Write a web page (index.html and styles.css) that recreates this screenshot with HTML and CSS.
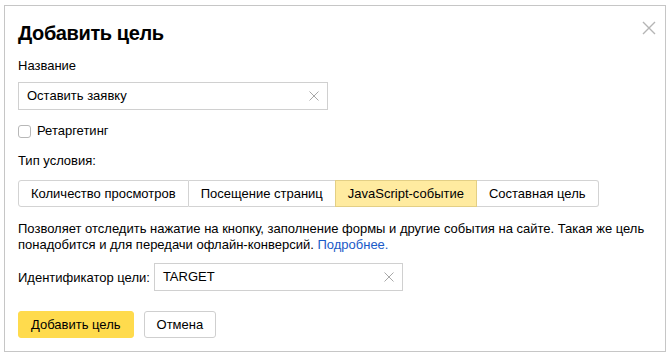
FILE: index.html
```html
<!DOCTYPE html>
<html lang="ru">
<head>
<meta charset="utf-8">
<title>Добавить цель</title>
<link rel="stylesheet" href="styles.css">
</head>
<body>
<div class="dialog">
  <button class="close" aria-label="Закрыть">
    <svg width="14" height="14" viewBox="0 0 14 14"><path d="M1 1L13 13M13 1L1 13" stroke="#b5b5b5" stroke-width="1.4" fill="none"/></svg>
  </button>
  <h1 class="title">Добавить цель</h1>
  <div class="label">Название</div>
  <div class="input name-input">
    <span class="input-text">Оставить заявку</span>
    <svg class="clear" width="10" height="10" viewBox="0 0 10 10"><path d="M0.5 0.5L9.5 9.5M9.5 0.5L0.5 9.5" stroke="#a8a8a8" stroke-width="1" fill="none"/></svg>
  </div>
  <label class="check">
    <span class="box"></span>
    <span>Ретаргетинг</span>
  </label>
  <div class="label cond-label">Тип условия:</div>
  <div class="segments">
    <span class="seg">Количество просмотров</span>
    <span class="seg">Посещение страниц</span>
    <span class="seg active">JavaScript-событие</span>
    <span class="seg">Составная цель</span>
  </div>
  <p class="desc">Позволяет отследить нажатие на кнопку, заполнение формы и другие события на сайте. Такая же цель понадобится и для передачи офлайн-конверсий. <a href="#">Подробнее.</a></p>
  <div class="id-row">
    <span class="id-label">Идентификатор цели:</span>
    <div class="input id-input">
      <span class="input-text">TARGET</span>
      <svg class="clear" width="10" height="10" viewBox="0 0 10 10"><path d="M0.5 0.5L9.5 9.5M9.5 0.5L0.5 9.5" stroke="#a8a8a8" stroke-width="1" fill="none"/></svg>
    </div>
  </div>
  <div class="actions">
    <button class="btn primary">Добавить цель</button>
    <button class="btn">Отмена</button>
  </div>
</div>
</body>
</html>
```

FILE: styles.css
```css
* { box-sizing: border-box; }
html, body { margin: 0; padding: 0; background: #fff; }
body {
  font-family: "Liberation Sans", Arial, sans-serif;
  font-size: 13px;
  color: #000;
  padding: 5px 4px 0 4px;
}
.dialog {
  position: relative;
  width: 662px;
  height: 347px;
  border: 1px solid #c6c6c6;
  padding: 0 13px;
}
.close {
  position: absolute;
  top: 15px;
  right: 9px;
  width: 14px;
  height: 14px;
  padding: 0;
  border: 0;
  background: none;
}
.close svg { display: block; }
.title {
  margin: 0;
  padding-top: 14px;
  font-size: 20px;
  letter-spacing: -0.4px;
  line-height: 26px;
  font-weight: bold;
}
.label {
  margin-top: 12px;
  line-height: 16px;
}
.input {
  display: flex;
  align-items: center;
  justify-content: space-between;
  height: 28px;
  border: 1px solid #d0d0d0;
  padding: 0 8px 0 8px;
}
.name-input {
  width: 310px;
  margin-top: 8px;
}
.input-text { line-height: 16px; }
.clear { display: block; }
.check {
  display: flex;
  align-items: center;
  gap: 6px;
  margin-top: 13px;
  line-height: 16px;
}
.box {
  width: 13px;
  height: 13px;
  border: 1px solid #b8b8b8;
  border-radius: 3px;
}
.cond-label { margin-top: 14px; }
.segments {
  display: flex;
  margin-top: 11px;
  height: 27px;
  width: fit-content;
}
.seg {
  display: flex;
  align-items: center;
  padding: 0 12px;
  border: 1px solid #d3d3d3;
  border-left-width: 0;
}
.seg:first-child { border-left-width: 1px; border-radius: 3px 0 0 3px; }
.seg:last-child { border-radius: 0 3px 3px 0; }
.seg.active {
  background: #ffeba0;
  border-color: #e3cf85;
  border-left-width: 1px;
  margin-left: -1px;
}
.desc {
  margin: 14px 0 0;
  line-height: 16px;
}
.desc a { color: #1a5ac8; text-decoration: none; }
.id-row {
  display: flex;
  align-items: center;
  gap: 4px;
  margin-top: 10px;
}
.id-input { width: 249px; }
.actions {
  display: flex;
  gap: 10px;
  margin-top: 20px;
}
.btn {
  font-family: inherit;
  font-size: 13px;
  color: #000;
  height: 27px;
  padding: 0 12px;
  border: 1px solid #cfcfcf;
  border-radius: 3px;
  background: #fff;
}
.btn.primary {
  background: #ffdb4d;
  border-color: #ffdb4d;
}
```
